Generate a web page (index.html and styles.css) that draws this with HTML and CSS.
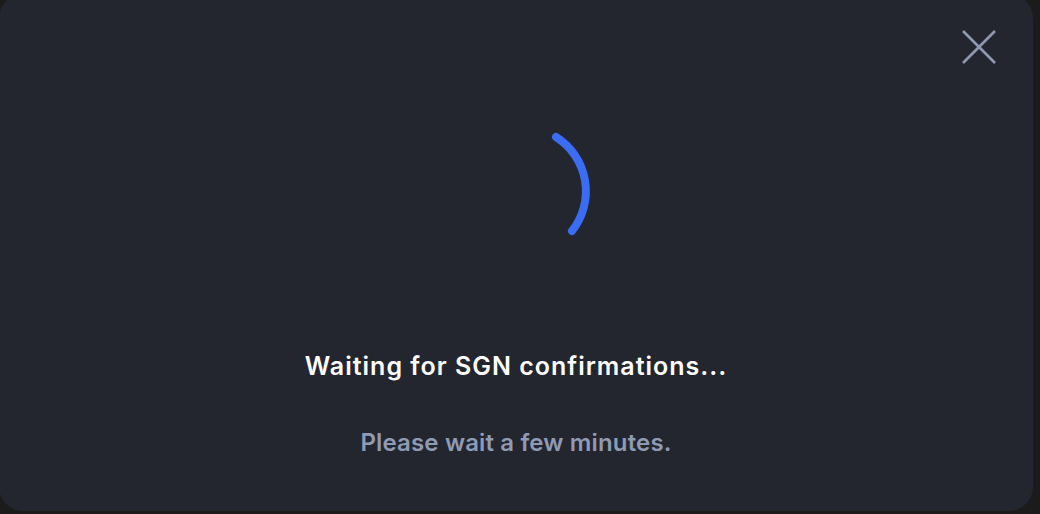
FILE: index.html
```html
<!DOCTYPE html>
<html lang="en">

<head>
    <meta charset="UTF-8">
    <meta name="viewport" content="width=device-width, initial-scale=1.0">
    <title>Waiting</title>
    <link rel="stylesheet" href="styles.css">
</head>

<body>
    <main class="modal">
        <button class="close-btn" aria-label="Close">
            <svg width="34" height="34" viewBox="0 0 34 34">
                <line x1="1" y1="1" x2="33" y2="33" />
                <line x1="33" y1="1" x2="1" y2="33" />
            </svg>
        </button>
        <div class="spinner">
            <svg width="160" height="130" viewBox="0 0 160 130">
                <path d="M 117 17 A 64 64 0 0 1 133 111" />
            </svg>
        </div>
        <h2 class="title">Waiting for SGN confirmations...</h2>
        <p class="sub">Please wait a few minutes.</p>
    </main>
</body>

</html>
```

FILE: styles.css
```css
html, body {
    margin: 0;
    height: 100%;
    overflow: hidden;
}
body {
    background: #1b1b1c;
    font-family: Inter, "Noto Sans", sans-serif;
}
.modal {
    width: 1034px;
    height: 517px;
    margin: -6px 0 0 -1px;
    background: #23252f;
    border-radius: 24px;
    display: flex;
    flex-direction: column;
    align-items: center;
    box-sizing: border-box;
    padding-top: 36px;
}
.close-btn {
    align-self: flex-end;
    margin-right: 37px;
    width: 34px;
    height: 34px;
    padding: 0;
    border: none;
    background: none;
    display: flex;
}
.close-btn line {
    stroke: #8e98ae;
    stroke-width: 2.6;
}
.spinner {
    margin-top: 56px;
    margin-left: 6px;
    display: flex;
}
.spinner path {
    fill: none;
    stroke: #3a6cf4;
    stroke-width: 8;
    stroke-linecap: round;
}
.title {
    margin: 100px 0 0;
    font-size: 25px;
    line-height: 32px;
    letter-spacing: 1px;
    font-weight: 600;
    color: #ffffff;
}
.sub {
    margin: 47px 0 0;
    font-size: 24px;
    line-height: 28px;
    letter-spacing: 0.15px;
    font-weight: 600;
    color: #8f9bb3;
}
```
